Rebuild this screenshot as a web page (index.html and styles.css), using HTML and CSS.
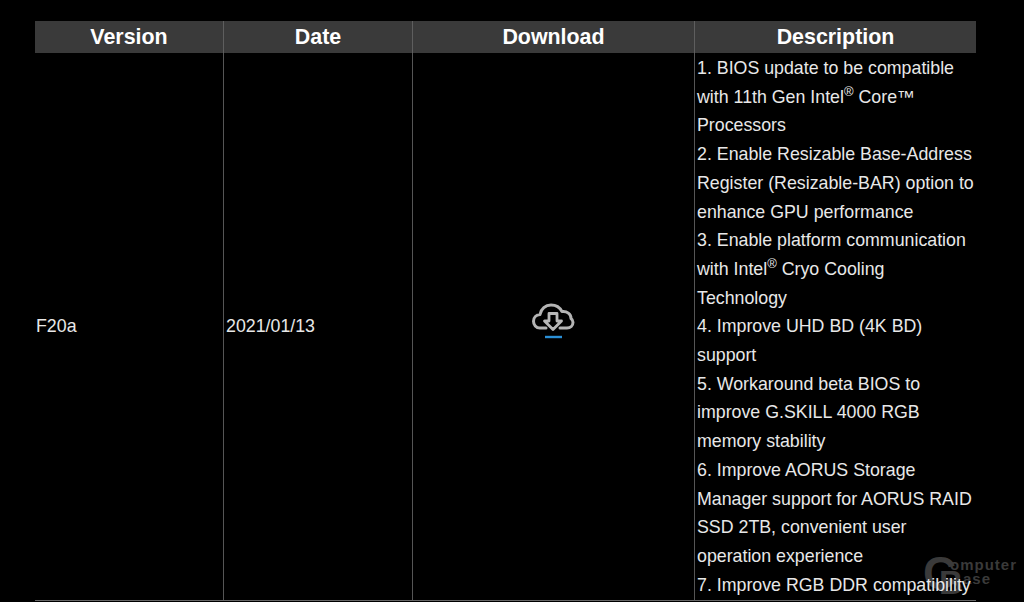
FILE: index.html
```html
<!DOCTYPE html>
<html lang="en">
<head>
<meta charset="utf-8">
<title>BIOS</title>
<link rel="stylesheet" href="styles.css">
</head>
<body>
<main class="page">
  <div class="table">
    <div class="head">Version</div>
    <div class="head">Date</div>
    <div class="head">Download</div>
    <div class="head last">Description</div>
    <div class="cell first">F20a</div>
    <div class="cell">2021/01/13</div>
    <div class="cell center">
      <svg class="dl" width="44" height="38" viewBox="0 0 44 38" fill="none">
        <path d="M15 26H9C5 26 2.5 22.8 2.5 19.3C2.5 15.5 5.4 12.7 9 12.5C10 7 14.5 3 20 3C25 3 29 5.6 31 9.6C36 9 40 12 40 16.5C41.4 17.6 42 18.8 42 20.2C42 23.6 39.4 26 36 26H29" stroke="#b4b4b4" stroke-width="3" stroke-linecap="round" stroke-linejoin="round"/>
        <path d="M18 11.5H26V19H30.5L22 27.5L13.5 19H18Z" stroke="#b8b8b8" stroke-width="2.8" stroke-linejoin="round"/>
        <path d="M14 35H31" stroke="#2a8fd6" stroke-width="2.4"/>
      </svg>
    </div>
    <div class="cell desc">1. BIOS update to be compatible<br>with 11th Gen Intel<sup>®</sup> Core™<br>Processors<br>2. Enable Resizable Base-Address<br>Register (Resizable-BAR) option to<br>enhance GPU performance<br>3. Enable platform communication<br>with Intel<sup>®</sup> Cryo Cooling<br>Technology<br>4. Improve UHD BD (4K BD)<br>support<br>5. Workaround beta BIOS to<br>improve G.SKILL 4000 RGB<br>memory stability<br>6. Improve AORUS Storage<br>Manager support for AORUS RAID<br>SSD 2TB, convenient user<br>operation experience<br>7. Improve RGB DDR compatibility</div>
  </div>
  <div class="mark" aria-hidden="true">
    <span class="mark-c">C</span><span class="mark-b">B</span>
    <span class="mark-t1">omputer</span><span class="mark-t2">ase</span>
  </div>
</main>
</body>
</html>
```

FILE: styles.css
```css
html, body {
  margin: 0;
  height: 602px;
  overflow: hidden;
  background: #000;
}
.page {
  padding: 21px 48px 0 35px;
  font-family: "Liberation Sans", Arial, sans-serif;
  color: #eee;
}
.table {
  position: relative;
  z-index: 1;
  display: grid;
  grid-template-columns: 189px 189px 282px 281px;
  grid-template-rows: 32px 547px;
  border-bottom: 1px solid #666;
  width: 941px;
}
.head {
  background: #3a3a3a;
  color: #fff;
  font-weight: 700;
  font-size: 21.4px;
  line-height: 32px;
  text-align: center;
  border-right: 1px solid #5e5e5e;
}
.head.last, .cell.desc { border-right: 0; }
.cell {
  border-right: 1px solid #555;
  display: flex;
  align-items: center;
  padding-left: 2px;
  font-size: 17.8px;
  line-height: 28.7px;
  color: #e8e8e8;
}
.cell.first { padding-left: 1px; }
.cell.center {
  justify-content: center;
  padding-left: 0;
}
.cell.desc {
  display: block;
  padding-top: 1px;
  white-space: nowrap;
  overflow: hidden;
}
.cell sup {
  font-size: 13px;
  line-height: 0;
}
.dl {
  display: block;
  margin: 0 1px 11px 0;
}
.mark {
  position: absolute;
  left: 924px;
  top: 550px;
  width: 100px;
  height: 50px;
  color: #3a3a3a;
  font-weight: 700;
}
.mark span { position: absolute; }
.mark-c { left: -1px; top: -4px; font-size: 46px; }
.mark-b { left: 15px; top: 14px; font-size: 33px; }
.mark-t1 { left: 26px; top: 6px; font-size: 15px; letter-spacing: 1px; }
.mark-t2 { left: 39px; top: 20px; font-size: 15px; letter-spacing: 1px; }
```
